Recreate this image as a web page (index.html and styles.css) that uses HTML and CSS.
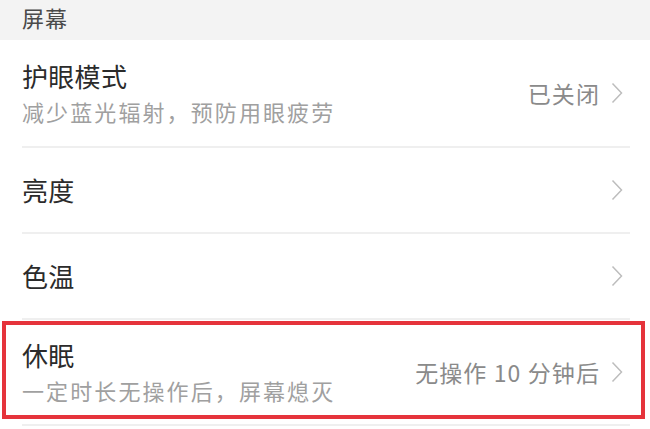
FILE: index.html
```html
<!DOCTYPE html>
<html lang="zh-CN">
<head>
<meta charset="utf-8">
<link rel="stylesheet" href="styles.css">
</head>
<body>
<div class="page">
  <div class="section-header">屏幕</div>
  <div class="list">
    <div class="row row-tall">
      <div class="texts">
        <div class="title">护眼模式</div>
        <div class="subtitle">减少蓝光辐射，预防用眼疲劳</div>
      </div>
      <div class="right">
        <span class="value">已关闭</span>
        <svg class="chev" width="12" height="22" viewBox="0 0 12 22"><path d="M1.5 1.5 L10.5 11 L1.5 20.5" fill="none" stroke="#bdbdbd" stroke-width="1.5"/></svg>
      </div>
    </div>
    <div class="row row-short">
      <div class="texts"><div class="title">亮度</div></div>
      <div class="right">
        <svg class="chev" width="12" height="22" viewBox="0 0 12 22"><path d="M1.5 1.5 L10.5 11 L1.5 20.5" fill="none" stroke="#bdbdbd" stroke-width="1.5"/></svg>
      </div>
    </div>
    <div class="row row-short">
      <div class="texts"><div class="title">色温</div></div>
      <div class="right">
        <svg class="chev" width="12" height="22" viewBox="0 0 12 22"><path d="M1.5 1.5 L10.5 11 L1.5 20.5" fill="none" stroke="#bdbdbd" stroke-width="1.5"/></svg>
      </div>
    </div>
    <div class="row row-tall row-last">
      <div class="texts">
        <div class="title">休眠</div>
        <div class="subtitle">一定时长无操作后，屏幕熄灭</div>
      </div>
      <div class="right">
        <span class="value">无操作 10 分钟后</span>
        <svg class="chev" width="12" height="22" viewBox="0 0 12 22"><path d="M1.5 1.5 L10.5 11 L1.5 20.5" fill="none" stroke="#bdbdbd" stroke-width="1.5"/></svg>
      </div>
    </div>
  </div>
  <div class="highlight"></div>
</div>
</body>
</html>
```
FILE: styles.css
```css
* { box-sizing: border-box; }
html, body { margin: 0; padding: 0; }
body {
  width: 650px;
  height: 429px;
  overflow: hidden;
  background: #ffffff;
  font-family: "Noto Sans CJK SC", "Noto Sans", sans-serif;
}
.page {
  position: relative;
  width: 650px;
  height: 429px;
}
.section-header {
  height: 40px;
  background: #f3f3f3;
  padding-left: 22px;
  font-size: 22px;
  letter-spacing: 1px;
  line-height: 34px;
  color: #4a4a4a;
}
.list {
  padding: 0 20px 0 22px;
}
.row {
  display: flex;
  align-items: center;
  justify-content: space-between;
  border-bottom: 2px solid #efefef;
  padding-right: 7px;
}
.row-tall { height: 108px; }
.row-short { height: 86px; }
.row-last { height: 106px; }
.texts {
  display: flex;
  flex-direction: column;
}
.title {
  font-size: 26px;
  line-height: 34px;
  color: #2b2b2b;
  letter-spacing: 0.3px;
}
.subtitle {
  margin-top: 1px;
  font-size: 22px;
  line-height: 34px;
  color: #a0a0a0;
  letter-spacing: 2.1px;
}
.right {
  display: flex;
  align-items: center;
  gap: 11px;
}
.value {
  font-size: 23px;
  line-height: 30px;
  color: #8a8a8a;
  letter-spacing: 1.1px;
}
.chev { display: block; }
.highlight {
  position: absolute;
  left: 2px;
  top: 321px;
  width: 643px;
  height: 98px;
  border: 4px solid #e5333b;
}
```
